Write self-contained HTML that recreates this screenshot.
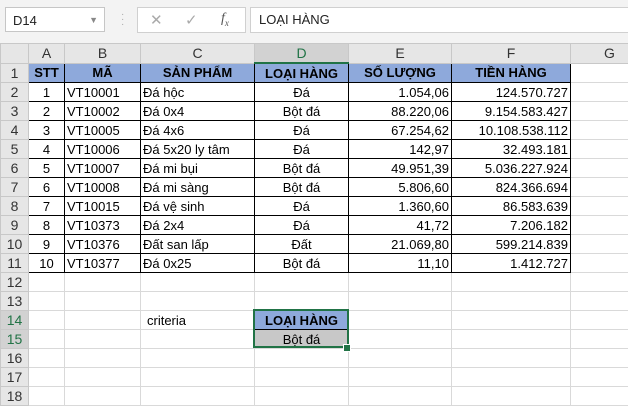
<!DOCTYPE html><html><head><meta charset="utf-8"><style>
body{margin:0;width:628px;height:407px;overflow:hidden;background:#fff;font-family:"Liberation Sans",Arial,sans-serif;position:relative}
.top{position:absolute;left:0;top:0;width:628px;height:43px;background:#f3f3f3}
.nb{position:absolute;left:5px;top:7px;width:100px;height:25px;background:#fff;border:1px solid #c6c6c6;font-size:13px;line-height:25px;padding-left:7px;box-sizing:border-box;color:#222}
.fx{position:absolute;left:137px;top:7px;width:109px;height:26px;background:#fff;border:1px solid #d0d0d0;box-sizing:border-box;color:#aaa;font-size:15px}
.fb{position:absolute;left:250px;top:7px;width:380px;height:26px;background:#fff;border:1px solid #d0d0d0;box-sizing:border-box;font-size:13px;line-height:24px;padding-left:8px;color:#222}
table{position:absolute;left:0;top:43px;width:648px;border-collapse:collapse;table-layout:fixed;font-size:13px}
td{height:18px;border:1px solid #d9d9d9;padding:0 2px;white-space:nowrap;overflow:hidden;color:#000}
tr.h td{background:#e6e6e6;text-align:center;font-size:14px;color:#333;border-color:#c8c8c8}
td.r{background:#e6e6e6;text-align:center;font-size:14px;color:#333;border-color:#c8c8c8}
.t td.d{border:1px solid #000}
.hd{background:#8ea9db;font-weight:bold;text-align:center;border:1px solid #000!important}
.c{text-align:center}.n{text-align:right}
</style></head><body>
<div class="top">
<div class="nb">D14<span style="position:absolute;right:6px;top:0;color:#888;font-size:9px">▼</span></div>
<div style="position:absolute;left:121px;top:12px;color:#aaa;font-size:10px;line-height:5px">·<br>·<br>·</div>
<div class="fx"><span style="position:absolute;left:12px;top:3px">✕</span><span style="position:absolute;left:47px;top:3px">✓</span><span style="position:absolute;left:83px;top:3px;color:#555;font-style:italic;font-family:'Liberation Serif',serif;font-size:14px">f<sub style="font-size:9px">x</sub></span></div>
<div class="fb">LOẠI HÀNG</div>
</div>
<table class="t">
<colgroup><col style="width:28px"><col style="width:36px"><col style="width:76px"><col style="width:114px"><col style="width:94px"><col style="width:103px"><col style="width:119px"><col style="width:78px"></colgroup>
<tr class="h"><td style="background:#e6e6e6"></td><td>A</td><td>B</td><td>C</td><td style="background:#d2d2d2;border-bottom:2px solid #217346;color:#217346">D</td><td>E</td><td>F</td><td>G</td></tr>
<tr><td class="r">1</td><td class="hd">STT</td><td class="hd">MÃ</td><td class="hd">SẢN PHẨM</td><td class="hd">LOẠI HÀNG</td><td class="hd">SỐ LƯỢNG</td><td class="hd">TIỀN HÀNG</td><td></td></tr>
<tr><td class="r">2</td><td class="d c">1</td><td class="d">VT10001</td><td class="d">Đá hộc</td><td class="d c">Đá</td><td class="d n">1.054,06</td><td class="d n">124.570.727</td><td></td></tr>
<tr><td class="r">3</td><td class="d c">2</td><td class="d">VT10002</td><td class="d">Đá 0x4</td><td class="d c">Bột đá</td><td class="d n">88.220,06</td><td class="d n">9.154.583.427</td><td></td></tr>
<tr><td class="r">4</td><td class="d c">3</td><td class="d">VT10005</td><td class="d">Đá 4x6</td><td class="d c">Đá</td><td class="d n">67.254,62</td><td class="d n">10.108.538.112</td><td></td></tr>
<tr><td class="r">5</td><td class="d c">4</td><td class="d">VT10006</td><td class="d">Đá 5x20 ly tâm</td><td class="d c">Đá</td><td class="d n">142,97</td><td class="d n">32.493.181</td><td></td></tr>
<tr><td class="r">6</td><td class="d c">5</td><td class="d">VT10007</td><td class="d">Đá mi bụi</td><td class="d c">Bột đá</td><td class="d n">49.951,39</td><td class="d n">5.036.227.924</td><td></td></tr>
<tr><td class="r">7</td><td class="d c">6</td><td class="d">VT10008</td><td class="d">Đá mi sàng</td><td class="d c">Bột đá</td><td class="d n">5.806,60</td><td class="d n">824.366.694</td><td></td></tr>
<tr><td class="r">8</td><td class="d c">7</td><td class="d">VT10015</td><td class="d">Đá vệ sinh</td><td class="d c">Đá</td><td class="d n">1.360,60</td><td class="d n">86.583.639</td><td></td></tr>
<tr><td class="r">9</td><td class="d c">8</td><td class="d">VT10373</td><td class="d">Đá 2x4</td><td class="d c">Đá</td><td class="d n">41,72</td><td class="d n">7.206.182</td><td></td></tr>
<tr><td class="r">10</td><td class="d c">9</td><td class="d">VT10376</td><td class="d">Đất san lấp</td><td class="d c">Đất</td><td class="d n">21.069,80</td><td class="d n">599.214.839</td><td></td></tr>
<tr><td class="r">11</td><td class="d c">10</td><td class="d">VT10377</td><td class="d">Đá 0x25</td><td class="d c">Bột đá</td><td class="d n">11,10</td><td class="d n">1.412.727</td><td></td></tr>
<tr><td class="r">12</td><td></td><td></td><td></td><td></td><td></td><td></td><td></td></tr>
<tr><td class="r">13</td><td></td><td></td><td></td><td></td><td></td><td></td><td></td></tr>
<tr><td class="r" style="background:#d2d2d2;color:#217346">14</td><td></td><td></td><td style="padding-left:6px">criteria</td><td class="hd" style="border:1px solid #000!important">LOẠI HÀNG</td><td></td><td></td><td></td></tr>
<tr><td class="r" style="background:#d2d2d2;color:#217346">15</td><td></td><td></td><td></td><td class="c" style="background:#c8c8c8">Bột đá</td><td></td><td></td><td></td></tr>
<tr><td class="r">16</td><td></td><td></td><td></td><td></td><td></td><td></td><td></td></tr>
<tr><td class="r">17</td><td></td><td></td><td></td><td></td><td></td><td></td><td></td></tr>
<tr><td class="r">18</td><td></td><td></td><td></td><td></td><td></td><td></td><td></td></tr>
</table>
<div style="position:absolute;left:253px;top:309px;width:96px;height:39px;border:2px solid #217346;box-sizing:border-box"></div>
<div style="position:absolute;left:343px;top:344px;width:6px;height:6px;background:#217346;border:1px solid #fff"></div>
</body></html>
